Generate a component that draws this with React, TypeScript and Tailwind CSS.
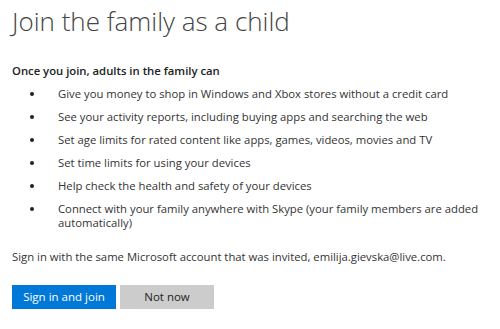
import React from 'react';

const items = [
  'Give you money to shop in Windows and Xbox stores without a credit card',
  'See your activity reports, including buying apps and searching the web',
  'Set age limits for rated content like apps, games, videos, movies and TV',
  'Set time limits for using your devices',
  'Help check the health and safety of your devices',
  'Connect with your family anywhere with Skype (your family members are added automatically)',
];

export default function App() {
  return (
    <div className="w-[500px] h-[329px] bg-white text-[#333] font-['Open_Sans',sans-serif] pl-3 pr-5 overflow-hidden">
      {/* Heading */}
      <h1 className="text-[26px] font-light leading-none pt-[8px] text-[#444]">
        Join the family as a child
      </h1>

      <p className="mt-[30px] text-[11.3px] font-semibold leading-[14px] text-[#222]">
        Once you join, adults in the family can
      </p>

      <ul className="mt-[9px] flex flex-col gap-[9.5px]">
        {items.map((text) => (
          <li key={text} className="flex text-[11.3px] leading-[13.5px]">
            <span className="w-[46px] shrink-0 pl-[18px] pt-[5px]">
              <span className="block w-[3.5px] h-[3.5px] rounded-full bg-[#222]" />
            </span>
            <span>{text}</span>
          </li>
        ))}
      </ul>

      <p className="mt-[21px] text-[11.3px] leading-[14px]">
        Sign in with the same Microsoft account that was invited, emilija.gievska@live.com.
      </p>

      <div className="mt-[21px] flex gap-1">
        <button className="w-[104px] h-[24px] bg-[#0078d7] text-white text-[11.5px]">Sign in and join</button>
        <button className="w-[94px] h-[24px] bg-[#cccccc] text-[#222] text-[11.5px]">Not now</button>
      </div>
    </div>
  );
}
